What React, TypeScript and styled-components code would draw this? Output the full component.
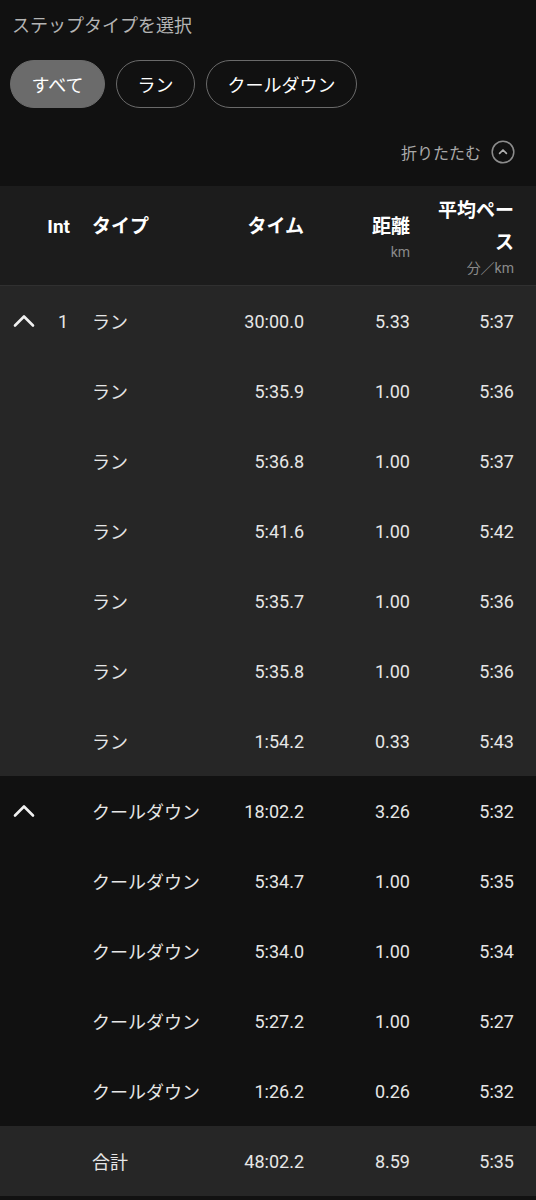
import React from 'react';
import styled, { createGlobalStyle } from 'styled-components';

const GlobalStyle = createGlobalStyle`
  html, body {
    margin: 0;
    padding: 0;
    background: #111111;
  }
  body {
    font-family: Roboto, "Noto Sans CJK JP", sans-serif;
    color: #e6e6e6;
  }
`;

const Page = styled.div`
  width: 536px;
  min-height: 1200px;
  background: #111111;
  display: flex;
  flex-direction: column;
`;

const Title = styled.div`
  margin: 13px 12px 0;
  font-size: 18px;
  line-height: 26px;
  color: #b4b4b4;
`;

const PillRow = styled.div`
  display: flex;
  gap: 11px;
  margin: 21px 10px 0;
`;

const Pill = styled.button<{ $active?: boolean }>`
  height: 48px;
  padding: 0 20.5px;
  border-radius: 24px;
  font-family: inherit;
  font-size: 18px;
  color: #ffffff;
  background: ${({ $active }) => ($active ? '#6b6b6b' : 'transparent')};
  border: 1.5px solid ${({ $active }) => ($active ? '#6b6b6b' : '#6a6a6a')};
  cursor: pointer;
`;

const CollapseRow = styled.div`
  display: flex;
  align-items: center;
  justify-content: flex-end;
  gap: 10px;
  height: 44px;
  margin-top: 22px;
  padding-right: 21px;
  font-size: 16px;
  color: #a8a8a8;
`;

const Table = styled.div`
  margin-top: 12px;
  display: flex;
  flex-direction: column;
`;

const Grid = styled.div`
  display: grid;
  grid-template-columns: 24px 32px 1fr 90px 106px 104px;
  align-items: center;
  padding: 0 22px 0 12px;
`;

const HeaderRow = styled(Grid)`
  height: 99px;
  background: #1c1c1c;
  border-bottom: 1px solid #303030;
  font-weight: 700;
  color: #ffffff;
`;

const HeaderCell = styled.div<{ $right?: boolean; $pad?: boolean; $shift?: number }>`
  display: flex;
  flex-direction: column;
  align-items: ${({ $right }) => ($right ? 'flex-end' : 'flex-start')};
  padding-left: ${({ $pad }) => ($pad ? '24px' : '0')};
  margin-right: ${({ $shift }) => ($shift ? `${-$shift}px` : '0')};
  text-align: ${({ $right }) => ($right ? 'right' : 'left')};
`;

const HeaderLabel = styled.div<{ $maxWidth?: number }>`
  font-size: 19px;
  line-height: 32px;
  max-width: ${({ $maxWidth }) => ($maxWidth ? `${$maxWidth}px` : 'none')};
`;

const Unit = styled.div`
  font-size: 14px;
  line-height: 18px;
  height: 18px;
  font-weight: 400;
  color: #8a8a8a;
`;

const Group = styled.div<{ $shade?: boolean }>`
  background: ${({ $shade }) => ($shade ? '#262626' : '#111111')};
`;

const Row = styled(Grid)`
  height: 70px;
  font-size: 18px;
  color: #e6e6e6;
`;

const TotalRow = styled(Row)`
  background: #262626;
`;

const Cell = styled.div<{ $right?: boolean; $pad?: boolean }>`
  text-align: ${({ $right }) => ($right ? 'right' : 'left')};
  padding-left: ${({ $pad }) => ($pad ? '24px' : '0')};
  white-space: nowrap;
`;

const ChevronCell = styled.div`
  display: flex;
  align-items: center;
  justify-content: center;
`;

const Chevron = () => (
  <svg width="22" height="14" viewBox="0 0 22 14" fill="none">
    <polyline points="2,11.5 11,2.5 20,11.5" stroke="#f0f0f0" strokeWidth="2.6" strokeLinecap="round" strokeLinejoin="round" />
  </svg>
);

const CircleChevron = () => (
  <svg width="24" height="24" viewBox="0 0 24 24" fill="none">
    <circle cx="12" cy="12" r="10.8" stroke="#8c8c8c" strokeWidth="1.5" />
    <polyline points="8.6,13.4 12,10 15.4,13.4" stroke="#b0b0b0" strokeWidth="1.7" strokeLinecap="round" strokeLinejoin="round" />
  </svg>
);

type Step = { time: string; dist: string; pace: string };

const runSteps: Step[] = [
  { time: '5:35.9', dist: '1.00', pace: '5:36' },
  { time: '5:36.8', dist: '1.00', pace: '5:37' },
  { time: '5:41.6', dist: '1.00', pace: '5:42' },
  { time: '5:35.7', dist: '1.00', pace: '5:36' },
  { time: '5:35.8', dist: '1.00', pace: '5:36' },
  { time: '1:54.2', dist: '0.33', pace: '5:43' },
];

const coolSteps: Step[] = [
  { time: '5:34.7', dist: '1.00', pace: '5:35' },
  { time: '5:34.0', dist: '1.00', pace: '5:34' },
  { time: '5:27.2', dist: '1.00', pace: '5:27' },
  { time: '1:26.2', dist: '0.26', pace: '5:32' },
];

const groups = [
  {
    label: 'ラン',
    int: '1',
    shade: true,
    summary: { time: '30:00.0', dist: '5.33', pace: '5:37' },
    steps: runSteps,
  },
  {
    label: 'クールダウン',
    int: '',
    shade: false,
    summary: { time: '18:02.2', dist: '3.26', pace: '5:32' },
    steps: coolSteps,
  },
];

const App: React.FC = () => {
  return (
    <>
      <GlobalStyle />
      <Page>
        <Title>ステップタイプを選択</Title>
        <PillRow>
          <Pill $active>すべて</Pill>
          <Pill>ラン</Pill>
          <Pill>クールダウン</Pill>
        </PillRow>
        <CollapseRow>
          <span>折りたたむ</span>
          <CircleChevron />
        </CollapseRow>

        <Table>
          <HeaderRow>
            <div />
            <HeaderCell $right $shift={2}>
              <HeaderLabel>Int</HeaderLabel>
              <Unit />
            </HeaderCell>
            <HeaderCell $pad>
              <HeaderLabel>タイプ</HeaderLabel>
              <Unit />
            </HeaderCell>
            <HeaderCell $right>
              <HeaderLabel>タイム</HeaderLabel>
              <Unit />
            </HeaderCell>
            <HeaderCell $right>
              <HeaderLabel>距離</HeaderLabel>
              <Unit>km</Unit>
            </HeaderCell>
            <HeaderCell $right>
              <HeaderLabel $maxWidth={80}>平均ペース</HeaderLabel>
              <Unit>分／km</Unit>
            </HeaderCell>
          </HeaderRow>

          {groups.map((g) => (
            <Group key={g.label} $shade={g.shade}>
              <Row>
                <ChevronCell>
                  <Chevron />
                </ChevronCell>
                <Cell $right>{g.int}</Cell>
                <Cell $pad>{g.label}</Cell>
                <Cell $right>{g.summary.time}</Cell>
                <Cell $right>{g.summary.dist}</Cell>
                <Cell $right>{g.summary.pace}</Cell>
              </Row>
              {g.steps.map((s, i) => (
                <Row key={i}>
                  <div />
                  <div />
                  <Cell $pad>{g.label}</Cell>
                  <Cell $right>{s.time}</Cell>
                  <Cell $right>{s.dist}</Cell>
                  <Cell $right>{s.pace}</Cell>
                </Row>
              ))}
            </Group>
          ))}

          <TotalRow>
            <div />
            <div />
            <Cell $pad>合計</Cell>
            <Cell $right>48:02.2</Cell>
            <Cell $right>8.59</Cell>
            <Cell $right>5:35</Cell>
          </TotalRow>
        </Table>
      </Page>
    </>
  );
};

export default App;
